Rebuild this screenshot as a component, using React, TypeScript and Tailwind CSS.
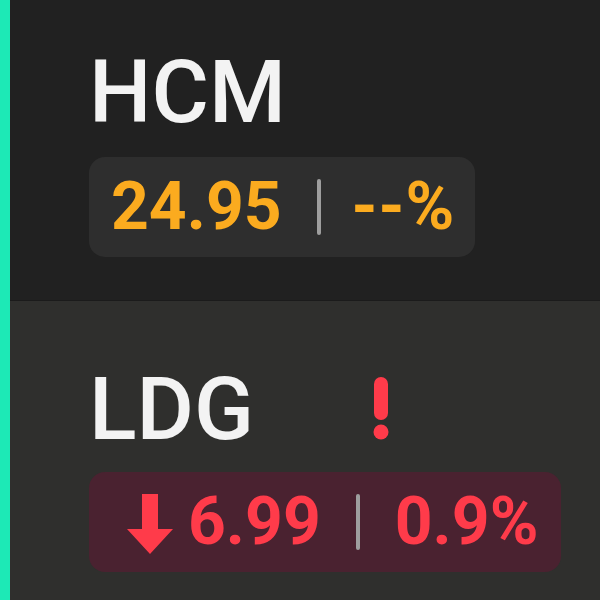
import React from "react";

const font = { fontFamily: "Roboto, 'Noto Sans', sans-serif" };

export default function App() {
  return (
    <div className="flex w-[600px] h-[600px] overflow-hidden bg-[#212121]" style={font}>
      <div className="w-[10px] shrink-0 bg-[#1de9b6]" />
      <div className="flex flex-col flex-1">
        <div className="h-[301px] bg-[#212121] pl-[79px] pt-[48px] flex flex-col items-start border-b border-[#1b1b1b]">
          <div className="text-[88px] leading-[88px] h-[88px] font-medium text-[#f3f3f3]">HCM</div>
          <div className="mt-[21px] h-[100px] flex items-center rounded-[16px] bg-[#2e2e2e] pl-[22px] pr-[20px] text-[66px] leading-[66px] font-bold text-[#fbab1f]">
            <span>24.95</span>
            <div className="w-[4px] h-[56px] rounded-full bg-[#9e9e9e] ml-[35px] mr-[31px]" />
            <span className="tracking-[1px]">--%</span>
          </div>
        </div>
        <div className="flex-1 bg-[#2f2f2d] pl-[79px] pt-[64px] flex flex-col items-start">
          <div className="flex items-start">
            <div className="w-[284px] text-[88px] leading-[88px] h-[88px] font-medium text-[#f3f3f3]">LDG</div>
            <svg width="16" height="63" viewBox="0 0 16 63" className="mt-[12px]">
              <rect x="1" y="0" width="14" height="43" rx="7" fill="#ff3b4a" />
              <circle cx="8" cy="55" r="7.5" fill="#ff3b4a" />
            </svg>
          </div>
          <div className="mt-[19px] h-[100px] flex items-center rounded-[16px] bg-[#4a2230] pl-[38px] pr-[23px] text-[66px] leading-[66px] font-bold text-[#ff3b4a]">
            <svg width="46" height="60" viewBox="0 0 46 60" className="mr-[15px] mt-[4px]">
              <polygon points="15,0 31,0 31,35 46,35 23,60 0,35 15,35" fill="#ff3b4a" />
            </svg>
            <span>6.99</span>
            <div className="w-[4px] h-[56px] rounded-full bg-[#9e9e9e] mx-[35px]" />
            <span>0.9%</span>
          </div>
        </div>
      </div>
    </div>
  );
}
